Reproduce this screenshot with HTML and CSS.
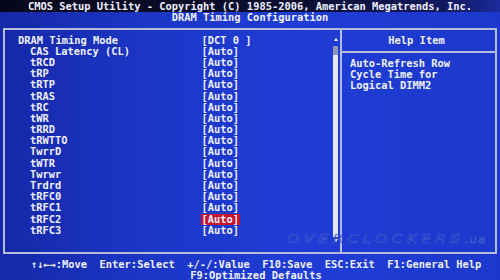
FILE: index.html
```html
<!DOCTYPE html>
<html lang="en">
<head>
  <meta charset="UTF-8" />
  <title>DRAM Timing Configuration</title>
  <link rel="stylesheet" href="styles.css">
</head>
<body>
  <div class="title-bar">CMOS Setup Utility - Copyright (C) 1985-2006, American Megatrends, Inc.</div>
  <div class="subtitle">DRAM Timing Configuration</div>

  <div class="frame">
    <div class="options">
      <div class="row"><span class="label">DRAM Timing Mode</span><span class="value">[DCT 0 ]</span></div>
      <div class="row sub"><span class="label">CAS Latency (CL)</span><span class="value">[Auto]</span></div>
      <div class="row sub"><span class="label">tRCD</span><span class="value">[Auto]</span></div>
      <div class="row sub"><span class="label">tRP</span><span class="value">[Auto]</span></div>
      <div class="row sub"><span class="label">tRTP</span><span class="value">[Auto]</span></div>
      <div class="row sub"><span class="label">tRAS</span><span class="value">[Auto]</span></div>
      <div class="row sub"><span class="label">tRC</span><span class="value">[Auto]</span></div>
      <div class="row sub"><span class="label">tWR</span><span class="value">[Auto]</span></div>
      <div class="row sub"><span class="label">tRRD</span><span class="value">[Auto]</span></div>
      <div class="row sub"><span class="label">tRWTTO</span><span class="value">[Auto]</span></div>
      <div class="row sub"><span class="label">TwrrD</span><span class="value">[Auto]</span></div>
      <div class="row sub"><span class="label">tWTR</span><span class="value">[Auto]</span></div>
      <div class="row sub"><span class="label">Twrwr</span><span class="value">[Auto]</span></div>
      <div class="row sub"><span class="label">Trdrd</span><span class="value">[Auto]</span></div>
      <div class="row sub"><span class="label">tRFC0</span><span class="value">[Auto]</span></div>
      <div class="row sub"><span class="label">tRFC1</span><span class="value">[Auto]</span></div>
      <div class="row sub"><span class="label">tRFC2</span><span class="value selected">[Auto]</span></div>
      <div class="row sub"><span class="label">tRFC3</span><span class="value">[Auto]</span></div>
    </div>

    <div class="scrollbar">
      <div class="arrow-up"></div>
      <div class="track"><div class="track-top"></div></div>
      <div class="arrow-down"></div>
    </div>

    <div class="help">
      <div class="help-title">Help Item</div>
      <div class="help-text">Auto-Refresh Row<br>Cycle Time for<br>Logical DIMM2</div>
    </div>

    <div class="watermark">OVERCLOCKERS<small>.ua</small></div>
  </div>

  <div class="footer">
    <div class="keys">↑↓←→:Move  Enter:Select  +/-/:Value  F10:Save  ESC:Exit  F1:General Help</div>
    <div class="keys">F9:Optimized Defaults</div>
  </div>
</body>
</html>
```

FILE: styles.css
```css
body {
  margin: 0;
  width: 500px;
  height: 280px;
  overflow: hidden;
  font-family: "DejaVu Sans Mono", "Liberation Mono", monospace;
  font-weight: bold;
  font-size: 10.4px;
  color: #eef0ff;
  background: linear-gradient(90deg, #1528a8 0%, #1c36c6 30%, #1f3dd6 60%, #1c38cc 100%);
}
.title-bar {
  height: 12px;
  line-height: 12px;
  text-align: center;
  white-space: pre;
  background: linear-gradient(90deg, #07071a 0%, #0c0e30 60%, #121a60 90%, #1a2a9c 100%);
}
.subtitle {
  line-height: 10px;
  text-align: center;
}
.frame {
  position: relative;
  margin: 6px 3px 0 3px;
  height: 222px;
  border: 2px solid #b4bcdc;
  display: flex;
}
.options {
  width: 313px;
  padding: 4.6px 0 0 13px;
}
.row {
  display: grid;
  grid-template-columns: 183.5px auto;
  line-height: 11.2px;
  height: 11.2px;
  white-space: pre;
}
.row.sub .label {
  padding-left: 12px;
}
.value {
  justify-self: start;
}
.value.selected {
  background: #c8142a;
  margin-left: -1px;
  padding: 0 1px;
}
.scrollbar {
  width: 9px;
  display: flex;
  flex-direction: column;
  align-items: center;
  padding: 8px 0 10px 0;
}
.arrow-up {
  width: 0;
  height: 0;
  border-left: 2.5px solid transparent;
  border-right: 2.5px solid transparent;
  border-bottom: 3px solid #eef0ff;
}
.arrow-down {
  width: 0;
  height: 0;
  margin-top: 2px;
  border-left: 2.5px solid transparent;
  border-right: 2.5px solid transparent;
  border-top: 3px solid #eef0ff;
}
.track {
  margin-top: 5px;
  width: 5px;
  flex: 1;
  background: #e4e6f0;
}
.track-top {
  height: 9px;
  background: #8e96b8;
}
.help {
  flex: 1;
  border-left: 2px solid #b4bcdc;
}
.help-title {
  height: 21px;
  line-height: 21px;
  text-align: center;
  padding-right: 4px;
  border-bottom: 2px solid #b4bcdc;
}
.help-text {
  padding: 5.4px 0 0 8px;
  line-height: 10.7px;
}
.watermark {
  position: absolute;
  left: 282px;
  top: 201px;
  font-family: "DejaVu Sans", sans-serif;
  font-style: italic;
  font-weight: normal;
  font-size: 13px;
  letter-spacing: 3.5px;
  transform: scaleX(1.2);
  transform-origin: left;
  color: rgba(25, 45, 185, 0.6);
  -webkit-text-stroke: 0.6px rgba(120, 140, 220, 0.45);
}
.watermark small {
  font-size: 10px;
  letter-spacing: 1px;
}
.footer {
  padding: 4.7px 0 0 12px;
  line-height: 11px;
  text-align: center;
}
.keys {
  white-space: pre;
}
```
